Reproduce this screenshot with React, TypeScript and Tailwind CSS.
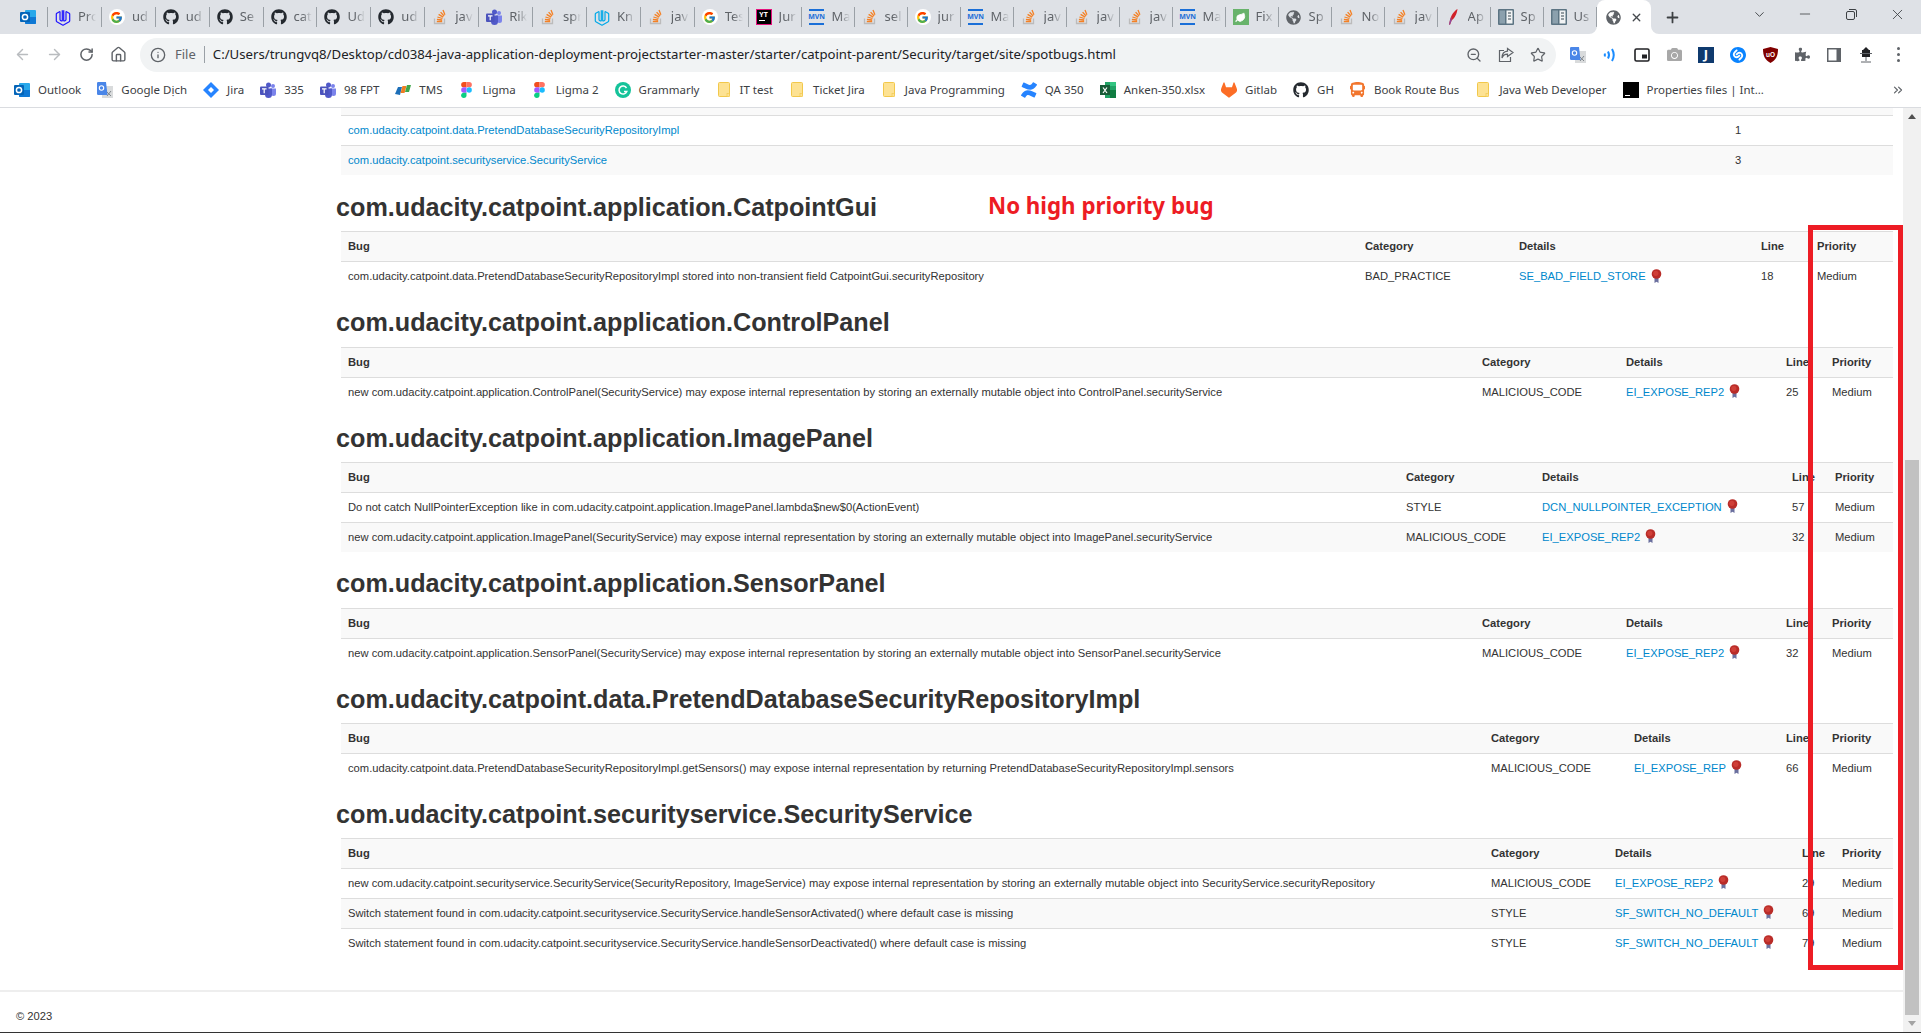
import { ReactNode } from 'react';
import { ArrowLeft, ArrowRight, RotateCw, Home, Info, ZoomOut, Star, ChevronDown, Minus, X, Plus, ChevronsRight, Leaf } from 'lucide-react';
import { FaGithub, FaGlobeAmericas, FaPuzzlePiece, FaCamera, FaBus } from 'react-icons/fa';
import { FcGoogle } from 'react-icons/fc';
import { SiConfluence, SiGitlab, SiShazam } from 'react-icons/si';

const Outlook = () => (
  <svg width="16" height="16" viewBox="0 0 16 16">
    <rect x="5" y="1" width="11" height="14" rx="1" fill="#28a8ea" />
    <path d="M5 8h11v6a1 1 0 0 1-1 1H6a1 1 0 0 1-1-1z" fill="#0f78d4" />
    <rect x="0" y="3" width="10" height="10" rx="1" fill="#0364b8" />
    <circle cx="5" cy="8" r="2.6" fill="none" stroke="#fff" strokeWidth="1.5" />
  </svg>
);

// rounded hexagon with the U cut through it
const Udacity = ({ color }: { color: string }) => (
  <svg width="16" height="17" viewBox="0 0 16 17" fill="none" stroke={color} strokeWidth="1.2" strokeLinejoin="round">
    <path d="M5 2.500 1.800 4.300a1 1 0 0 0-.5.900v6.600a1 1 0 0 0 .5.900l5.700 3.200a1 1 0 0 0 1 0l5.700-3.200a1 1 0 0 0 .5-.900V5.200a1 1 0 0 0-.5-.900L11 2.500" />
    <path d="M5 2.500v8c0 1 1.600 1.700 2.300 1.300V1.300M8.700 1.300v10.500c.7.400 2.300-.3 2.300-1.300v-8" />
  </svg>
);

const Google = () => (
  <span className="flex h-4 w-4 items-center justify-center rounded-full bg-white">
    <FcGoogle size={13} />
  </span>
);

const StackOverflow = () => (
  <svg width="16" height="16" viewBox="0 0 16 16" fill="none">
    <path d="M2.5 9.5v5h10v-5" stroke="#bcbbbb" strokeWidth="1.3" />
    <path d="M4.8 12.5h5.4M4.9 10.4l5.3.6M5.4 8l5.1 1.5M6.6 5.4l4.6 2.7M8.6 3.1l3.5 3.9M11 1l1.9 4.8" stroke="#f48024" strokeWidth="1.3" />
  </svg>
);

const Teams = () => (
  <svg width="16" height="16" viewBox="0 0 16 16">
    <circle cx="13" cy="4" r="2" fill="#7b83eb" />
    <circle cx="8.5" cy="3" r="2.5" fill="#5059c9" />
    <path d="M10 6.5h6v5a2.5 2.5 0 0 1-5 0z" fill="#7b83eb" />
    <path d="M4 6.5h8v6a3.5 3.5 0 0 1-7 0z" fill="#5059c9" />
    <rect x="0" y="4.5" width="8.5" height="8.5" rx="1" fill="#4b53bc" />
    <path d="M2 6.8h4.5M4.2 6.8v4.4" stroke="#fff" strokeWidth="1.2" />
  </svg>
);

const YouTrack = () => (
  <span className="flex h-4 w-4 flex-col items-center border border-[#e5127d] bg-black text-[7px] leading-[9px] font-bold text-white">
    YT
    <span className="mt-px mr-1 h-px w-1.5 bg-white" />
  </span>
);

const Maven = () => (
  <span className="flex h-4 w-[15px] flex-col items-center justify-center border-y-2 border-[#1a6fd8] text-[7px] leading-[8px] font-bold text-[#1a6fd8]">
    MVN
  </span>
);

const LeafIcon = () => (
  <span className="flex h-4 w-4 items-center justify-center bg-[#68b36b]">
    <Leaf size={11} color="#fff" fill="#fff" />
  </span>
);

const Feather = () => (
  <svg width="16" height="16" viewBox="0 0 16 16">
    <path d="M12.5 0C9 2 6 6.5 5 11l-1 4.5 1 .3 1.6-4.4C9.500 9.500 12 5 12.500 0z" fill="#d22128" />
    <path d="M6.500 7.500C6 9 5.500 10 5 11l-1 4.500 1 .3 1.600-4.400z" fill="#8e4b9c" />
  </svg>
);

const Columns = () => (
  <svg width="16" height="16" viewBox="0 0 16 16">
    <rect width="16" height="16" rx="1" fill="#5c7483" />
    <rect x="1.500" y="1.500" width="5.500" height="13" fill="#8ba0ad" />
    <rect x="8.500" y="1.500" width="6" height="13" fill="#f1f3f4" />
    <path d="M10 4h3M10 7h3M10 10h3" stroke="#37474f" strokeWidth="1.200" />
  </svg>
);

const Translate = () => (
  <svg width="16" height="16" viewBox="0 0 16 16">
    <rect x="5" y="4" width="11" height="12" fill="#d9dbdc" />
    <path d="M9 9l5 5M14 9l-4 5" stroke="#80868b" strokeWidth="1" />
    <path d="M1.200 0H9l1.500 13H1.200A1.200 1.200 0 0 1 0 11.800V1.200A1.200 1.200 0 0 1 1.200 0z" fill="#4a86e8" />
    <circle cx="4.500" cy="6" r="2.200" fill="none" stroke="#fff" strokeWidth="1.100" />
  </svg>
);

const Jira = () => (
  <svg width="16" height="16" viewBox="0 0 16 16">
    <path d="M8 0l8 8-8 8-8-8z" fill="#2684ff" />
    <path d="M8 5l3 3-3 3-3-3z" fill="#fff" />
  </svg>
);

const Tms = () => (
  <svg width="16" height="16" viewBox="0 0 16 16">
    <path d="M0 12 3 5h4l-2 8z" fill="#1d6fb8" />
    <path d="M5.500 11 7.500 4h4l-2 7z" fill="#ef7d22" />
    <path d="M10 10l2-7h4l-2 7z" fill="#3fa64a" />
  </svg>
);

const Figma = () => (
  <svg width="11" height="16" viewBox="0 0 12 18">
    <path d="M0 3a3 3 0 0 1 3-3h3v6H3a3 3 0 0 1-3-3z" fill="#f24e1e" />
    <path d="M6 0h3a3 3 0 0 1 0 6H6z" fill="#ff7262" />
    <path d="M0 9a3 3 0 0 1 3-3h3v6H3a3 3 0 0 1-3-3z" fill="#a259ff" />
    <circle cx="9" cy="9" r="3" fill="#1abcfe" />
    <path d="M0 15a3 3 0 0 1 3-3h3v3a3 3 0 0 1-6 0z" fill="#0acf83" />
  </svg>
);

const Grammarly = () => (
  <svg width="16" height="16" viewBox="0 0 16 16" fill="none">
    <circle cx="8" cy="8" r="8" fill="#15c39a" />
    <path d="M11.500 6A4 4 0 1 0 11.800 9.500H9" stroke="#fff" strokeWidth="1.500" />
  </svg>
);

const Folder = () => (
  <svg width="12" height="15" viewBox="0 0 12 15">
    <rect x=".5" y=".5" width="11" height="14" rx="1" fill="#fde293" stroke="#f2c84b" />
    <rect x="9" y="11.500" width="2.500" height="3" fill="#fde293" stroke="#f2c84b" strokeWidth=".6" />
  </svg>
);

const Excel = () => (
  <svg width="16" height="16" viewBox="0 0 16 16">
    <rect x="5" width="11" height="16" fill="#21a366" />
    <rect x="10" y="8" width="6" height="8" fill="#107c41" />
    <rect x="10" width="6" height="4" fill="#33c481" />
    <rect y="3" width="10" height="10" fill="#185c37" />
    <path d="M3 5.500l4 5.500M7 5.500l-4 5.500" stroke="#fff" strokeWidth="1.200" />
  </svg>
);

const Terminal = () => (
  <span className="flex h-4 w-4 items-end bg-black pb-0.5 pl-0.5">
    <span className="h-px w-[5px] bg-white" />
  </span>
);

const Medal = () => (
  <svg width="11" height="14" viewBox="0 0 11 14" className="ml-[5px] inline-block -translate-y-0.5 align-middle">
    <path d="M3.500 8h4v6l-2-1.200-2 1.200z" fill="#6a6f9e" />
    <circle cx="5.500" cy="5" r="4.800" fill="#b92c28" />
    <circle cx="4.800" cy="4.300" r="2.600" fill="#cf3f38" />
  </svg>
);

const tabs: { icon: ReactNode; text: string }[] = [
  { icon: <Udacity color="#2015ff" />, text: 'Pro' },
  { icon: <Google />, text: 'ud' },
  { icon: <FaGithub size={16} color="#24292f" />, text: 'ud' },
  { icon: <FaGithub size={16} color="#24292f" />, text: 'Se' },
  { icon: <FaGithub size={16} color="#24292f" />, text: 'cat' },
  { icon: <FaGithub size={16} color="#24292f" />, text: 'Ud' },
  { icon: <FaGithub size={16} color="#24292f" />, text: 'ud' },
  { icon: <StackOverflow />, text: 'jav' },
  { icon: <Teams />, text: 'Rik' },
  { icon: <StackOverflow />, text: 'spr' },
  { icon: <Udacity color="#02a9e8" />, text: 'Kn' },
  { icon: <StackOverflow />, text: 'jav' },
  { icon: <Google />, text: 'Tes' },
  { icon: <YouTrack />, text: 'Jur' },
  { icon: <Maven />, text: 'Ma' },
  { icon: <StackOverflow />, text: 'sel' },
  { icon: <Google />, text: 'jur' },
  { icon: <Maven />, text: 'Ma' },
  { icon: <StackOverflow />, text: 'jav' },
  { icon: <StackOverflow />, text: 'jav' },
  { icon: <StackOverflow />, text: 'jav' },
  { icon: <Maven />, text: 'Ma' },
  { icon: <LeafIcon />, text: 'Fix' },
  { icon: <FaGlobeAmericas size={15} color="#5f6368" />, text: 'Sp' },
  { icon: <StackOverflow />, text: 'No' },
  { icon: <StackOverflow />, text: 'jav' },
  { icon: <Feather />, text: 'Ap' },
  { icon: <Columns />, text: 'Sp' },
  { icon: <Columns />, text: 'Us' },
];

const bookmarks: { icon: ReactNode; text: string }[] = [
  { icon: <Outlook />, text: 'Outlook' },
  { icon: <Translate />, text: 'Google Dịch' },
  { icon: <Jira />, text: 'Jira' },
  { icon: <Teams />, text: '335' },
  { icon: <Teams />, text: '98 FPT' },
  { icon: <Tms />, text: 'TMS' },
  { icon: <Figma />, text: 'Ligma' },
  { icon: <Figma />, text: 'Ligma 2' },
  { icon: <Grammarly />, text: 'Grammarly' },
  { icon: <Folder />, text: 'IT test' },
  { icon: <Folder />, text: 'Ticket Jira' },
  { icon: <Folder />, text: 'Java Programming' },
  { icon: <SiConfluence size={16} color="#2684ff" />, text: 'QA 350' },
  { icon: <Excel />, text: 'Anken-350.xlsx' },
  { icon: <SiGitlab size={16} color="#fc6d26" />, text: 'Gitlab' },
  { icon: <FaGithub size={16} color="#24292f" />, text: 'GH' },
  { icon: <FaBus size={15} color="#f2762e" />, text: 'Book Route Bus' },
  { icon: <Folder />, text: 'Java Web Developer' },
  { icon: <Terminal />, text: 'Properties files | Int...' },
];

type Row = { bug: string; cat: string; det: string; line: string };
type Section = { name: string; cols: string[]; rows: Row[] };

const sections: Section[] = [
  {
    name: 'com.udacity.catpoint.application.CatpointGui',
    cols: ['w-[1017px]', 'w-[154px]', 'w-[242px]', 'w-[56px]', 'w-[83px]'],
    rows: [
      { bug: 'com.udacity.catpoint.data.PretendDatabaseSecurityRepositoryImpl stored into non-transient field CatpointGui.securityRepository', cat: 'BAD_PRACTICE', det: 'SE_BAD_FIELD_STORE', line: '18' },
    ],
  },
  {
    name: 'com.udacity.catpoint.application.ControlPanel',
    cols: ['w-[1134px]', 'w-[144px]', 'w-[160px]', 'w-[46px]', 'w-[68px]'],
    rows: [
      { bug: 'new com.udacity.catpoint.application.ControlPanel(SecurityService) may expose internal representation by storing an externally mutable object into ControlPanel.securityService', cat: 'MALICIOUS_CODE', det: 'EI_EXPOSE_REP2', line: '25' },
    ],
  },
  {
    name: 'com.udacity.catpoint.application.ImagePanel',
    cols: ['w-[1058px]', 'w-[136px]', 'w-[250px]', 'w-[43px]', 'w-[65px]'],
    rows: [
      { bug: 'Do not catch NullPointerException like in com.udacity.catpoint.application.ImagePanel.lambda$new$0(ActionEvent)', cat: 'STYLE', det: 'DCN_NULLPOINTER_EXCEPTION', line: '57' },
      { bug: 'new com.udacity.catpoint.application.ImagePanel(SecurityService) may expose internal representation by storing an externally mutable object into ImagePanel.securityService', cat: 'MALICIOUS_CODE', det: 'EI_EXPOSE_REP2', line: '32' },
    ],
  },
  {
    name: 'com.udacity.catpoint.application.SensorPanel',
    cols: ['w-[1134px]', 'w-[144px]', 'w-[160px]', 'w-[46px]', 'w-[68px]'],
    rows: [
      { bug: 'new com.udacity.catpoint.application.SensorPanel(SecurityService) may expose internal representation by storing an externally mutable object into SensorPanel.securityService', cat: 'MALICIOUS_CODE', det: 'EI_EXPOSE_REP2', line: '32' },
    ],
  },
  {
    name: 'com.udacity.catpoint.data.PretendDatabaseSecurityRepositoryImpl',
    cols: ['w-[1143px]', 'w-[143px]', 'w-[152px]', 'w-[46px]', 'w-[68px]'],
    rows: [
      { bug: 'com.udacity.catpoint.data.PretendDatabaseSecurityRepositoryImpl.getSensors() may expose internal representation by returning PretendDatabaseSecurityRepositoryImpl.sensors', cat: 'MALICIOUS_CODE', det: 'EI_EXPOSE_REP', line: '66' },
    ],
  },
  {
    name: 'com.udacity.catpoint.securityservice.SecurityService',
    cols: ['w-[1143px]', 'w-[124px]', 'w-[187px]', 'w-[40px]', 'w-[58px]'],
    rows: [
      { bug: 'new com.udacity.catpoint.securityservice.SecurityService(SecurityRepository, ImageService) may expose internal representation by storing an externally mutable object into SecurityService.securityRepository', cat: 'MALICIOUS_CODE', det: 'EI_EXPOSE_REP2', line: '29' },
      { bug: 'Switch statement found in com.udacity.catpoint.securityservice.SecurityService.handleSensorActivated() where default case is missing', cat: 'STYLE', det: 'SF_SWITCH_NO_DEFAULT', line: '69' },
      { bug: 'Switch statement found in com.udacity.catpoint.securityservice.SecurityService.handleSensorDeactivated() where default case is missing', cat: 'STYLE', det: 'SF_SWITCH_NO_DEFAULT', line: '79' },
    ],
  },
];

const td = 'h-[30px] border-t border-[#ddd] px-[7px] py-0 text-left align-middle whitespace-nowrap';

function TabStrip() {
  return (
    <div className="flex h-[34px] shrink-0 items-center bg-[#dee1e6] font-['Noto_Sans',sans-serif] text-xs text-[#5f6368]">
      <div className="flex h-5 w-[48px] shrink-0 items-center justify-end border-r border-[#9aa0a6] pr-[11px]">
        <Outlook />
      </div>
      {tabs.map((tab, i) => (
        <div key={i} className={`flex h-5 shrink-0 items-center gap-[7px] overflow-hidden border-r border-[#9aa0a6] pl-[7px] ${i < 13 ? 'w-[53.9px]' : 'w-[53px]'}`}>
          <span className="flex w-4 shrink-0 justify-center">{tab.icon}</span>
          <span className="w-[18px] shrink-0 overflow-hidden text-[13px] [mask-image:linear-gradient(to_right,black_45%,transparent)]">{tab.text}</span>
        </div>
      ))}
      <div className="relative flex h-[34px] w-[54px] shrink-0 items-center gap-[9px] rounded-t-lg bg-white pl-[9px]">
        <FaGlobeAmericas size={15} color="#5f6368" />
        <X size={13} color="#45494d" strokeWidth={2.5} />
        <svg width="8" height="8" viewBox="0 0 8 8" className="absolute bottom-0 -left-2" fill="#fff">
          <path d="M8 0v8H0a8 8 0 0 0 8-8z" />
        </svg>
        <svg width="8" height="8" viewBox="0 0 8 8" className="absolute -right-2 bottom-0" fill="#fff">
          <path d="M0 0v8h8a8 8 0 0 1-8-8z" />
        </svg>
      </div>
      <span className="ml-2 flex w-7 justify-center">
        <Plus size={17} color="#3c4043" strokeWidth={2.5} />
      </span>
      <div className="mr-px ml-auto flex items-center text-[#3c4043]">
        <span className="flex w-[46px] justify-center pb-1.5"><ChevronDown size={15} strokeWidth={1.5} /></span>
        <span className="flex w-[46px] justify-center pb-1.5"><Minus size={16} strokeWidth={1.2} /></span>
        <span className="flex w-[46px] justify-center pb-1.5">
          <svg width="11" height="11" viewBox="0 0 11 11" fill="none" stroke="#3c4043">
            <rect x=".5" y="2.500" width="8" height="8" rx="1.500" />
            <path d="M3 .5h6a1.500 1.500 0 0 1 1.500 1.500v6" />
          </svg>
        </span>
        <span className="flex w-[46px] justify-center pb-1.5"><X size={17} strokeWidth={1.2} /></span>
      </div>
    </div>
  );
}

function Toolbar() {
  return (
    <div className="flex h-[41px] shrink-0 items-center bg-white font-['Noto_Sans',sans-serif] pl-1.5">
      <span className="flex w-8 justify-center"><ArrowLeft size={17} color="#b9bcbf" /></span>
      <span className="flex w-8 justify-center"><ArrowRight size={17} color="#b9bcbf" /></span>
      <span className="flex w-8 justify-center"><RotateCw size={15} color="#5f6368" strokeWidth={2.4} /></span>
      <span className="flex w-8 justify-center"><Home size={17} color="#5f6368" strokeWidth={2} /></span>
      <div className="ml-1.5 flex h-[34px] w-[1416px] shrink-0 items-center rounded-full bg-[#f1f3f4] pr-0.5 pl-2.5">
        <Info size={16} color="#5f6368" />
        <span className="ml-[9px] text-[13px] text-[#5f6368]">File</span>
        <span className="mx-2 h-[17px] w-px bg-[#9aa0a6]" />
        <span className="pt-px text-[13.2px] text-[#202124]">C:/Users/trungvq8/Desktop/cd0384-java-application-deployment-projectstarter-master/starter/catpoint-parent/Security/target/site/spotbugs.html</span>
        <span className="ml-auto flex w-8 justify-center"><ZoomOut size={16} color="#5f6368" /></span>
        <span className="flex w-8 justify-center">
          <svg width="16" height="16" viewBox="0 0 16 16" fill="none" stroke="#5f6368" strokeWidth="1.200">
            <path d="M6 3.500H1.500v11h11V10" />
            <path d="M9.500 1.500 15 5.500l-5.500 4V7.200C7 7.200 5 8.500 4 11c0-4 2-6.500 5.500-6.800z" />
          </svg>
        </span>
        <span className="flex w-8 justify-center"><Star size={16} color="#5f6368" strokeWidth={1.8} /></span>
      </div>
      <div className="ml-1.5 flex items-center">
        <span className="flex w-8 justify-center"><Translate /></span>
        <span className="flex w-8 justify-center">
          <svg width="16" height="16" viewBox="0 0 16 16" fill="none" stroke="#1a8cff" strokeWidth="2">
            <path d="M2.500 6.500q1 1.500 0 3M6 4.500q2 3.500 0 7M10 2q3.500 6 0 12" />
          </svg>
        </span>
        <span className="flex w-8 justify-center">
          <svg width="16" height="14" viewBox="0 0 16 14" fill="none">
            <rect x="1" y="1" width="14" height="12" rx="1.500" stroke="#202124" strokeWidth="1.600" />
            <rect x="8" y="6.500" width="5" height="4" fill="#202124" />
          </svg>
        </span>
        <span className="flex w-8 justify-center"><FaCamera size={15} color="#a8a8a8" /></span>
        <span className="flex w-8 justify-center">
          <span className="flex h-4 w-4 items-center justify-center bg-[#0f3a6e] text-[13px] leading-none font-bold text-white">J</span>
        </span>
        <span className="flex w-8 justify-center"><SiShazam size={16} color="#0a84ff" /></span>
        <span className="flex w-8 justify-center">
          <svg width="15" height="16" viewBox="0 0 15 16">
            <path d="M7.500 0 15 2c0 7-2 11-7.500 14C2 13 0 9 0 2z" fill="#800000" />
            <text x="7.500" y="10" textAnchor="middle" fontSize="6.500" fontWeight="700" fill="#fff" fontFamily="Liberation Sans, sans-serif">uO</text>
          </svg>
        </span>
        <span className="flex w-8 justify-center"><FaPuzzlePiece size={15} color="#5f6368" /></span>
        <span className="flex w-8 justify-center">
          <svg width="14" height="14" viewBox="0 0 14 14">
            <rect width="14" height="14" fill="#5f6368" />
            <rect x="1.500" y="1.500" width="8" height="11" fill="#fff" />
          </svg>
        </span>
        <span className="flex w-8 justify-center">
          <svg width="14" height="16" viewBox="0 0 14 16" fill="none">
            <path d="M7 0l3 3H4z" fill="#202124" />
            <rect x="3" y="3" width="8" height="7" fill="#202124" />
            <path d="M1 6.500h12M7 10v4M2 15h10" stroke="#5f6368" strokeWidth="1" />
          </svg>
        </span>
        <span className="flex w-8 flex-col items-center gap-[3px]">
          <span className="h-[3px] w-[3px] rounded-full bg-[#5f6368]" />
          <span className="h-[3px] w-[3px] rounded-full bg-[#5f6368]" />
          <span className="h-[3px] w-[3px] rounded-full bg-[#5f6368]" />
        </span>
      </div>
    </div>
  );
}

function BookmarkBar() {
  return (
    <div className="flex h-[33px] shrink-0 items-center border-b border-[#dadce0] bg-white pb-[3px] pl-1.5 font-['Noto_Sans',sans-serif] text-[11.5px] text-[#3c4043]">
      {bookmarks.map((b, i) => (
        <div key={i} className="flex shrink-0 items-center gap-2 px-2">
          <span className="flex w-4 shrink-0 justify-center">{b.icon}</span>
          <span className="whitespace-nowrap">{b.text}</span>
        </div>
      ))}
      <span className="mr-4 ml-auto"><ChevronsRight size={14} color="#5f6368" /></span>
    </div>
  );
}

function BugTable({ section }: { section: Section }) {
  return (
    <table className="w-full table-fixed border-separate border-spacing-0">
      <colgroup>
        {section.cols.map((c, i) => (
          <col key={i} className={c} />
        ))}
      </colgroup>
      <thead>
        <tr className="bg-[#f9f9f9] font-bold">
          <th className={td}>Bug</th>
          <th className={td}>Category</th>
          <th className={td}>Details</th>
          <th className={td}>Line</th>
          <th className={td}>Priority</th>
        </tr>
      </thead>
      <tbody>
        {section.rows.map((r, i) => (
          <tr key={i} className={i % 2 === 1 ? 'bg-[#f9f9f9]' : 'bg-white'}>
            <td className={td}>{r.bug}</td>
            <td className={td}>{r.cat}</td>
            <td className={td}>
              <a className="text-[#08c]">{r.det}</a>
              <Medal />
            </td>
            <td className={td}>{r.line}</td>
            <td className={td}>Medium</td>
          </tr>
        ))}
      </tbody>
    </table>
  );
}

function Scrollbar() {
  return (
    <div className="flex w-[18px] shrink-0 flex-col bg-[#f1f1f1]">
      <div className="flex h-[17px] items-center justify-center">
        <span className="h-0 w-0 border-x-4 border-b-[5px] border-x-transparent border-b-[#505050]" />
      </div>
      <div className="flex-1" />
      <div className="mx-0.5 h-[555px] bg-[#c1c1c1]" />
      <div className="flex h-[17px] items-center justify-center">
        <span className="h-0 w-0 border-x-4 border-t-[5px] border-x-transparent border-t-[#a3a3a3]" />
      </div>
    </div>
  );
}

export default function App() {
  return (
    <div className="flex h-[1033px] flex-col overflow-hidden border-b border-[#333] bg-white">
      <TabStrip />
      <Toolbar />
      <BookmarkBar />
      <div className="relative flex min-h-0 flex-1">
        <main className="min-w-0 flex-1 font-['Liberation_Sans',Arial,sans-serif] text-[11.2px] text-[#333]">
          <div className="pr-[10px] pl-[336px]">
            <div className="pl-[5px]">
              <div className="h-[7px] bg-[#f9f9f9]" />
              <table className="w-full table-fixed border-separate border-spacing-0">
                <colgroup>
                  <col className="w-[1387px]" />
                  <col />
                </colgroup>
                <tbody>
                  <tr className="bg-white">
                    <td className={td}><a className="text-[#08c]">com.udacity.catpoint.data.PretendDatabaseSecurityRepositoryImpl</a></td>
                    <td className={td}>1</td>
                  </tr>
                  <tr className="bg-[#f9f9f9]">
                    <td className={td}><a className="text-[#08c]">com.udacity.catpoint.securityservice.SecurityService</a></td>
                    <td className={td}>3</td>
                  </tr>
                </tbody>
              </table>
            </div>
            {sections.map((s, i) => (
              <section key={s.name}>
                <h3 className={`mb-[4.4px] h-10 text-[25.2px] leading-10 font-bold whitespace-nowrap text-[#333] ${i === 0 ? 'mt-3' : 'mt-[11px]'}`}>{s.name}</h3>
                <div className="pl-[5px]">
                  <BugTable section={s} />
                </div>
              </section>
            ))}
          </div>
          <footer className="mt-[32px] border-t-2 border-[#eee] pt-[16px] pl-4 leading-4">© 2023</footer>
        </main>
        <Scrollbar />

        {/* annotations drawn over the page */}
        <div className="absolute top-[83px] left-[988px] font-['Noto_Sans',sans-serif] text-[22.3px] leading-[30px] font-bold whitespace-nowrap text-[#ed1c24]">No high priority bug</div>
        <div className="absolute top-[117px] left-[1808px] h-[745px] w-[95px] border-[5px] border-[#ed1c24]" />
      </div>
    </div>
  );
}
